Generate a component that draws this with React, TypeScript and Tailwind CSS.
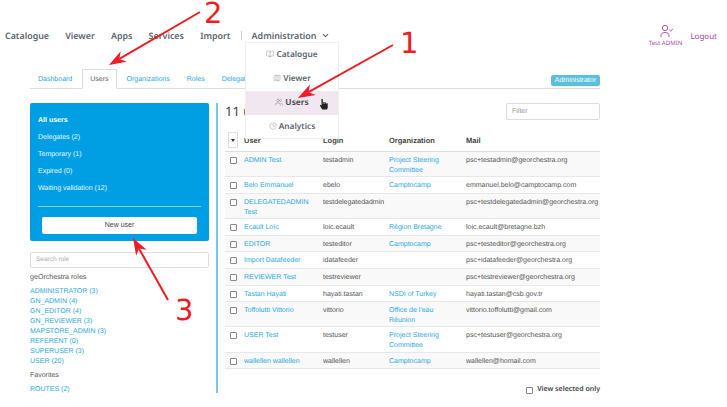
import React from "react";
import { Users, BookOpen, Map, PieChart, ChevronDown } from "lucide-react";

const rows: [string, string, string, string][] = [
  ["ADMIN Test", "testadmin", "Project Steering Committee", "psc+testadmin@georchestra.org"],
  ["Belo Emmanuel", "ebelo", "Camptocamp", "emmanuel.belo@camptocamp.com"],
  ["DELEGATEDADMIN Test", "testdelegatedadmin", "", "psc+testdelegatedadmin@georchestra.org"],
  ["Ecault Loïc", "loic.ecault", "Région Bretagne", "loic.ecault@bretagne.bzh"],
  ["EDITOR", "testeditor", "Camptocamp", "psc+testeditor@georchestra.org"],
  ["Import Datafeeder", "idatafeeder", "", "psc+idatafeeder@georchestra.org"],
  ["REVIEWER Test", "testreviewer", "", "psc+testreviewer@georchestra.org"],
  ["Tastan Hayati", "hayati.tastan", "NSDI of Turkey", "hayati.tastan@csb.gov.tr"],
  ["Toffolutti Vittorio", "vittorio", "Office de l'eau Réunion", "vittorio.toffolutti@gmail.com"],
  ["USER Test", "testuser", "Project Steering Committee", "psc+testuser@georchestra.org"],
  ["wallellen wallellen", "wallellen", "Camptocamp", "wallellen@homail.com"],
];
const roles = ["ADMINISTRATOR (3)", "GN_ADMIN (4)", "GN_EDITOR (4)", "GN_REVIEWER (3)", "MAPSTORE_ADMIN (3)", "REFERENT (0)", "SUPERUSER (3)", "USER (20)"];
const filters = ["Delegates (2)", "Temporary (1)", "Expired (0)", "Waiting validation (12)"];

function Arrow({ x1, y1, x2, y2 }: { x1: number; y1: number; x2: number; y2: number }) {
  const a = Math.atan2(y2 - y1, x2 - x1);
  const L = 17, W = 6;
  const bx = x2 - L * Math.cos(a), by = y2 - L * Math.sin(a);
  const nx = -Math.sin(a) * W, ny = Math.cos(a) * W;
  const mx = x2 - 12 * Math.cos(a), my = y2 - 12 * Math.sin(a);
  return (
    <g>
      <line x1={x1} y1={y1} x2={mx} y2={my} stroke="#ee1c25" strokeWidth="2" />
      <polygon points={`${x2},${y2} ${bx + nx},${by + ny} ${mx},${my} ${bx - nx},${by - ny}`} fill="#ee1c25" />
    </g>
  );
}

export default function App() {
  return (
    <div className="relative w-[727px] h-[407px] overflow-hidden bg-white font-['Liberation_Sans',sans-serif] text-[9px] text-[#555] [text-rendering:geometricPrecision]">
      {/* top nav */}
      <header className="h-[69px] flex items-start justify-between pt-[28px] font-['Noto_Sans',sans-serif]">
        <nav className="flex items-center pl-[5px] h-[15px] gap-[16.2px] text-[8.9px] font-semibold text-[#5c6670]">
          <span>Catalogue</span>
          <span>Viewer</span>
          <span>Apps</span>
          <span>Services</span>
          <span>Import</span>
          <span className="flex items-center gap-[10px] -ml-[6px]">
            <span className="w-px h-[9px] bg-[#ccc]" />
            <span>Administration</span>
            <ChevronDown size={9} strokeWidth={3} className="-ml-[5px]" />
          </span>
        </nav>
        <div className="flex items-start gap-[8px] pr-[10px] -mt-[4px] text-[#a04a9e]">
          <div className="flex flex-col items-center">
            <svg width="20" height="15" viewBox="0 0 20 15" fill="none" stroke="#a04a9e" strokeWidth="0.9">
              <circle cx="9" cy="4" r="2.7" />
              <path d="M5 13v-1.5c0-2 1.5-3 4-3s4 1 4 3V13" />
              <path d="M13.5 6l1.3 1.2 2-2.4" />
            </svg>
            <span className="text-[6.1px] leading-[9px] -mt-[1px]">Test ADMIN</span>
          </div>
          <span className="text-[8px] leading-[13px] mt-[6px]">Logout</span>
        </div>
      </header>

      {/* tabs */}
      <div className="mx-[30px] w-[570px] h-[20px] border-b border-[#ddd] flex items-end justify-between">
        <div className="flex items-end gap-[1px] text-[7px] text-[#29a8e0] h-[20px] -mb-px">
          <span className="px-[8px] h-[19px] leading-[19px]">Dashboard</span>
          <span className="px-[7px] ml-px h-[20px] leading-[19px] text-[#666] bg-white border border-b-white border-[#ddd]">Users</span>
          <span className="px-[8px] ml-px h-[19px] leading-[19px]">Organizations</span>
          <span className="px-[8px] h-[19px] leading-[19px]">Roles</span>
          <span className="px-[8px] h-[19px] leading-[19px]">Delegations</span>
        </div>
        <span className="mb-[2px] h-[11px] leading-[11px] px-[4px] rounded-[2px] bg-[#5bc0de] text-white text-[7px]">Administrator</span>
      </div>

      {/* main */}
      <div className="flex pl-[30px] pt-[14px]">
        <aside className="w-[188px] h-[290px] border-r-2 border-[#7cc4ea] pr-[7px] overflow-hidden">
          <div className="h-[138px] rounded-[2px] bg-[#009fe3] px-[8px] pt-[11px] text-white/90 text-[7px]">
            <div className="font-bold text-white h-[17px] leading-[13px]">All users</div>
            {filters.map((f) => (
              <div key={f} className="h-[17px] leading-[13px]">{f}</div>
            ))}
            <div className="border-t border-white/50 mt-[7px] pt-[10px] px-[4px]">
              <button className="block w-full h-[17px] rounded-[2px] bg-white text-[#444] text-[7px]">New user</button>
            </div>
          </div>
          <div className="mt-[11px] h-[16px] border border-[#ddd] rounded-[2px] pl-[5px] leading-[14px] text-[#aaa] text-[6.5px]">Search role</div>
          <div className="mt-[3px] leading-[12px] text-[7.1px] text-[#555]">geOrchestra roles</div>
          <div className="mt-[4px] text-[#29a8e0] text-[7px] leading-[10px]">
            {roles.map((r) => <div key={r}>{r}</div>)}
          </div>
          <div className="mt-[3px] leading-[12px] text-[7px] text-[#555]">Favorites</div>
          <div className="mt-[3px] text-[#29a8e0] text-[7px] leading-[10px]">ROUTES (2)</div>
        </aside>

        <main className="ml-[7px] w-[375px] relative">
          <div className="flex items-start justify-between h-[30px]">
            <span className="text-[13px] leading-[16px] text-[#444] font-['Noto_Sans',sans-serif]">11 users</span>
            <div className="w-[94px] h-[17px] border border-[#ddd] rounded-[2px] pl-[5px] leading-[15px] text-[#999] text-[7px]">Filter</div>
          </div>
          <div className="grid grid-cols-[19px_79px_66px_77px_134px] h-[19px] border-b border-[#ddd] text-[7.5px] font-bold text-[#444] leading-[14px] pt-px">
            <div className="pl-[1px]">
              <span className="flex items-center justify-center w-[10px] h-[16px] -mt-[2px] ml-[2px] border border-[#ddd] rounded-[1px] text-[#333]">
                <span className="border-x-[2px] border-t-[3px] border-x-transparent border-t-[#333]" />
              </span>
            </div>
            <div>User</div>
            <div>Login</div>
            <div>Organization</div>
            <div>Mail</div>
          </div>
          {rows.map((r, i) => (
            <div key={r[1]} className={`grid grid-cols-[19px_79px_66px_77px_134px] min-h-[16.6px] border-b border-[#e8e8e8] last:border-b-0 text-[7px] leading-[10px] pt-[4px] pb-[0.3px] ${i % 2 === 0 ? "bg-[#f9f9f9]" : "bg-white"}`}>
              <div className="pl-[5px]">
                <span className="block w-[7px] h-[7px] mt-[1px] border border-[#888] rounded-[1px] bg-white" />
              </div>
              <div className="text-[#29a8e0] pr-[2px]">{r[0]}</div>
              <div className="whitespace-nowrap">{r[1]}</div>
              <div className="text-[#29a8e0] pr-[10px]">{r[2]}</div>
              <div className="whitespace-nowrap">{r[3]}</div>
            </div>
          ))}
          <div className="flex items-center justify-end gap-[4px] mt-[16px] text-[7px] font-semibold text-[#444] font-['Noto_Sans',sans-serif]">
            <span className="w-[7px] h-[7px] border border-[#888] rounded-[1px]" />
            <span>View selected only</span>
          </div>
        </main>
      </div>

      {/* dropdown */}
      <div className="absolute left-[245px] top-[42px] w-[94px] h-[97px] bg-white border border-[#eee] font-['Noto_Sans',sans-serif] text-[8.3px] font-semibold text-[#5c6670]">
        <div className="h-[24px] flex items-center justify-center gap-[2px]"><BookOpen size={8} strokeWidth={1} className="-mt-[3px]" />Catalogue</div>
        <div className="h-[24px] flex items-center justify-center gap-[2px]"><Map size={8} strokeWidth={1} className="-mt-[3px]" />Viewer</div>
        <div className="h-[24px] flex items-center justify-center gap-[2px] bg-[#f1e7f0] text-[#4a4f57] font-bold relative">
          <Users size={8} strokeWidth={1} className="-mt-[3px]" />Users
          <svg className="absolute right-[9px] top-[7px]" width="10" height="12" viewBox="0 0 10 12" fill="#222">
            <path d="M2.4 1h1.4v5h.5V4h1.2v2h.4V4.6h1.2V6h.4V5.2h1.2V10l-.8 1.4H3.2L.8 7.4l.8-.6 1 1z" />
          </svg>
        </div>
        <div className="h-[24px] flex items-center justify-center gap-[2px]"><PieChart size={8} strokeWidth={1} className="-mt-[3px]" />Analytics</div>
      </div>

      {/* annotations */}
      <svg className="absolute inset-0 pointer-events-none" width="727" height="407">
        <Arrow x1={200} y1={12} x2={109} y2={65} />
        <Arrow x1={393} y1={45} x2={298} y2={98} />
        <Arrow x1={168} y1={300} x2={133} y2={238} />
        <text x="204" y="23" fontSize="29" fill="#ee1c25" fontFamily="DejaVu Sans">2</text>
        <text x="400" y="53" fontSize="29" fill="#ee1c25" fontFamily="DejaVu Sans">1</text>
        <text x="175" y="320" fontSize="29" fill="#ee1c25" fontFamily="DejaVu Sans">3</text>
      </svg>
    </div>
  );
}
